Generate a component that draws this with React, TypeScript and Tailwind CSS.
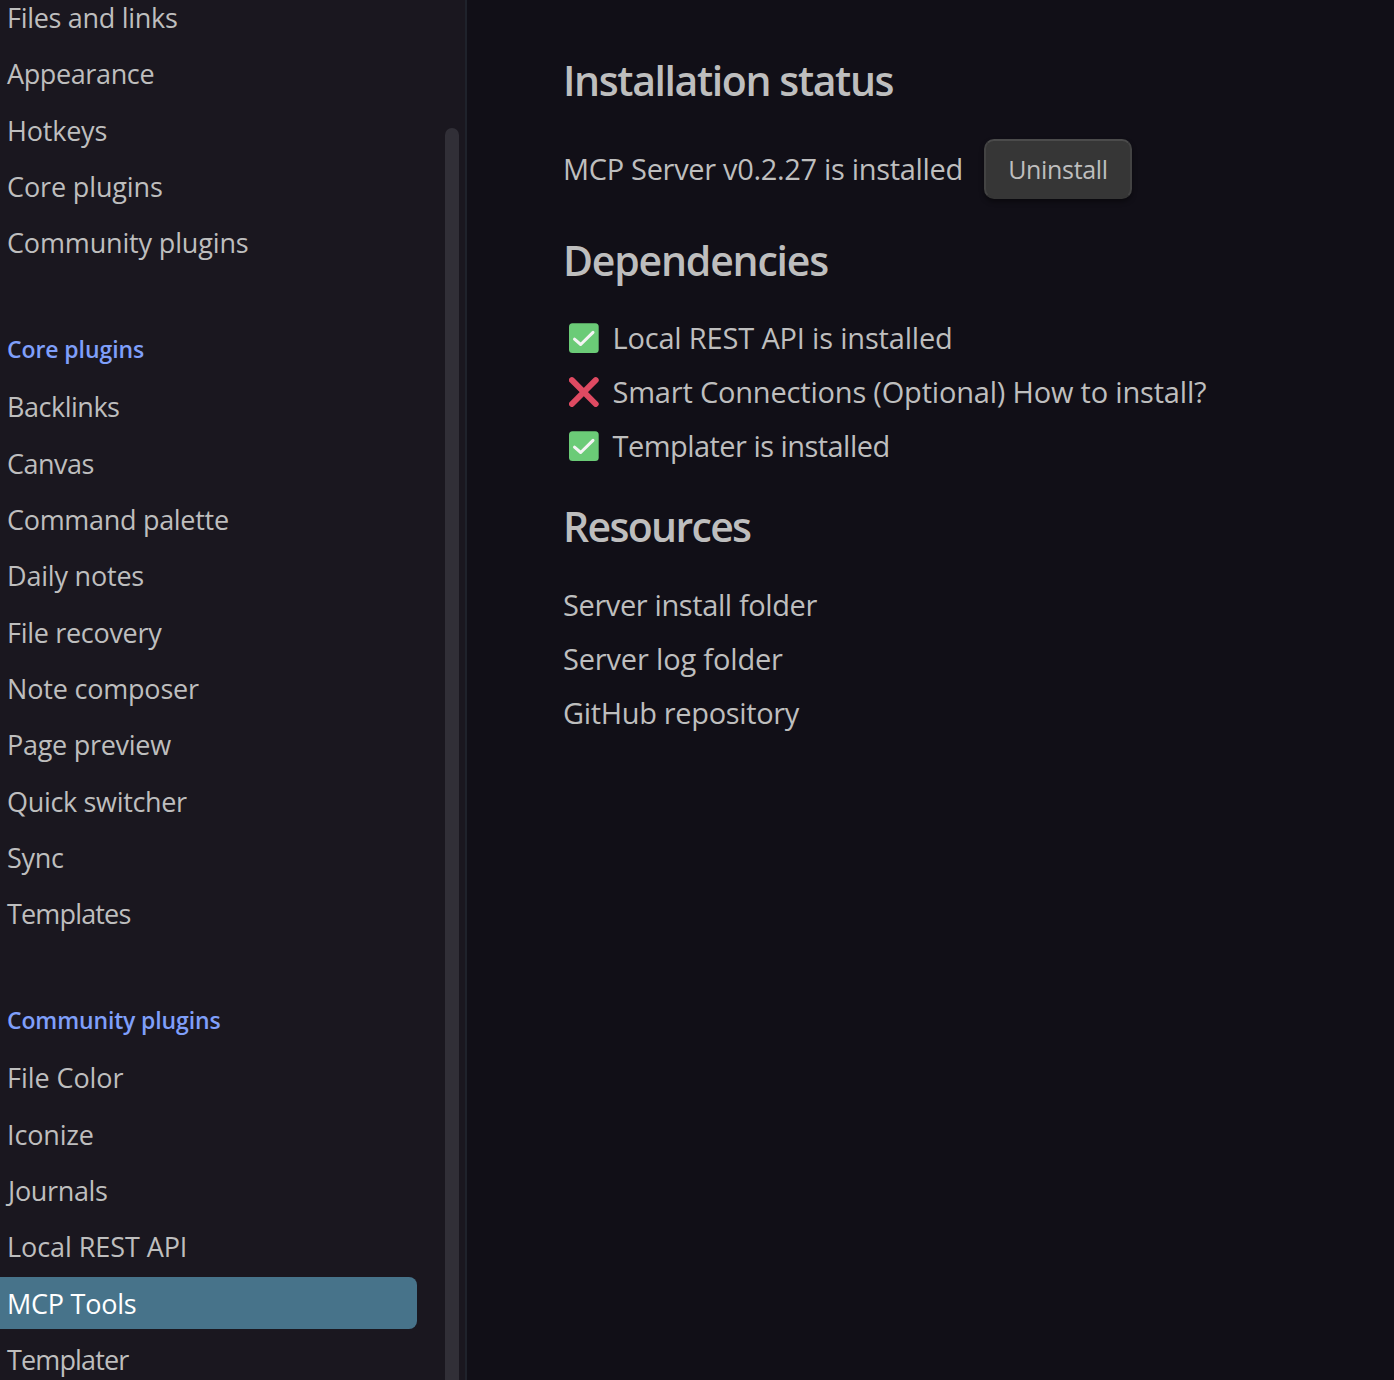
import React from "react";

type Entry = { label: string; tracking: string; active?: boolean };

const options: Entry[] = [
  { label: "Files and links", tracking: "tracking-[-0.3px]" },
  { label: "Appearance", tracking: "tracking-[-0.38px]" },
  { label: "Hotkeys", tracking: "tracking-[-0.2px]" },
  { label: "Core plugins", tracking: "tracking-[-0.13px]" },
  { label: "Community plugins", tracking: "tracking-[-0.15px]" },
];

const corePlugins: Entry[] = [
  { label: "Backlinks", tracking: "tracking-[-0.48px]" },
  { label: "Canvas", tracking: "tracking-[-0.52px]" },
  { label: "Command palette", tracking: "tracking-[-0.3px]" },
  { label: "Daily notes", tracking: "tracking-[-0.2px]" },
  { label: "File recovery", tracking: "tracking-[-0.3px]" },
  { label: "Note composer", tracking: "tracking-[-0.19px]" },
  { label: "Page preview", tracking: "tracking-[-0.28px]" },
  { label: "Quick switcher", tracking: "tracking-[-0.33px]" },
  { label: "Sync", tracking: "tracking-[-0.26px]" },
  { label: "Templates", tracking: "tracking-[-0.84px]" },
];

const communityPlugins: Entry[] = [
  { label: "File Color", tracking: "tracking-[-0.06px]" },
  { label: "Iconize", tracking: "tracking-[-0.15px]" },
  { label: "Journals", tracking: "tracking-[-0.35px] indent-px" },
  { label: "Local REST API", tracking: "tracking-[-0.07px]" },
  { label: "MCP Tools", tracking: "tracking-[-0.25px]", active: true },
  { label: "Templater", tracking: "tracking-[-0.87px]" },
];

const resources: Entry[] = [
  { label: "Server install folder", tracking: "tracking-[-0.39px]" },
  { label: "Server log folder", tracking: "tracking-[-0.17px]" },
  { label: "GitHub repository", tracking: "tracking-[-0.34px]" },
];

function NavList({ items }: { items: Entry[] }) {
  return (
    <ul>
      {items.map((item) => (
        <li
          key={item.label}
          className={`mb-[4.34px] h-[52px] w-[417px] rounded-r-lg pl-[7px] text-[27px] leading-[53px] whitespace-nowrap ${item.tracking} ${
            item.active ? "bg-[#47738a] text-white" : ""
          }`}
        >
          {item.label}
        </li>
      ))}
    </ul>
  );
}

function NavTitle({ children, tracking }: { children: string; tracking: string }) {
  return (
    <h3 className={`mt-[57.7px] h-[54.4px] pl-[7px] text-[23px] leading-[46px] font-semibold text-[#7f9ffa] ${tracking}`}>
      {children}
    </h3>
  );
}

function CheckIcon() {
  return (
    <svg className="size-[30px]" viewBox="0 0 30 30">
      <rect y="0.3" width="29.7" height="29.7" rx="3.5" fill="#6bcb77" />
      <path d="M5.5 16.2 11.7 21.5 24 9.4" fill="none" stroke="#f4f4f4" strokeWidth="3" strokeLinecap="round" strokeLinejoin="round" />
    </svg>
  );
}

function CrossIcon() {
  return (
    <svg className="size-[30px]" viewBox="0 0 30 30">
      <path d="M2.9 3.2 26.7 27M26.7 3.2 2.9 27" fill="none" stroke="#df4a62" strokeWidth="6" strokeLinecap="round" />
    </svg>
  );
}

function Dependency({ ok, label, tracking }: { ok: boolean; label: string; tracking: string }) {
  return (
    <li className="flex h-[54px] items-center gap-[14px] pl-[6.5px]">
      {ok ? <CheckIcon /> : <CrossIcon />}
      <span className={tracking}>{label}</span>
    </li>
  );
}

export default function App() {
  return (
    <div className="flex h-[1380px] w-[1394px] overflow-hidden bg-[#110f17] font-['Open_Sans',sans-serif] text-[#bebebe]">
      <aside className="flex w-[467px] shrink-0 justify-between border-r-2 border-[#1f222b] bg-[#1a171f]">
        <nav className="-mt-[9px]">
          <NavList items={options} />
          <NavTitle tracking="tracking-[-0.08px]">Core plugins</NavTitle>
          <NavList items={corePlugins} />
          <NavTitle tracking="tracking-[-0.14px]">Community plugins</NavTitle>
          <NavList items={communityPlugins} />
        </nav>
        <div className="mt-32 mr-1.5 w-3.5 rounded-t-full bg-[#312f37]" />
      </aside>

      <main className="pt-[50px] pl-[95px] text-[29px] whitespace-nowrap">
        <h2 className="h-[89px] pl-px text-[41px] leading-[60px] font-semibold tracking-[-1.4px]">Installation status</h2>
        <div className="flex h-[60px] w-[570px] items-center justify-between pl-px">
          <span className="tracking-[-0.32px]">MCP Server v0.2.27 is installed</span>
          <button className="h-[60px] w-[148px] rounded-[10px] border-2 border-[#434343] border-t-[#4b4b4b] border-b-[#363636] bg-[#363636] pt-0.5 text-[25px] tracking-[-0.32px] shadow-[0_3px_5px_rgba(0,0,0,0.4)]">
            Uninstall
          </button>
        </div>

        <h2 className="mt-[31px] h-[81px] pl-px text-[41px] leading-[60px] font-semibold tracking-[-1.2px]">Dependencies</h2>
        <ul>
          <Dependency ok label="Local REST API is installed" tracking="tracking-[-0.18px]" />
          <Dependency ok={false} label="Smart Connections (Optional) How to install?" tracking="tracking-[-0.19px]" />
          <Dependency ok label="Templater is installed" tracking="tracking-[-0.54px]" />
        </ul>

        <h2 className="mt-[23px] h-[82px] pl-px text-[41px] leading-[60px] font-semibold tracking-[-1.68px]">Resources</h2>
        <ul className="pl-px">
          {resources.map((r) => (
            <li key={r.label} className={`h-[54px] leading-[54px] ${r.tracking}`}>
              {r.label}
            </li>
          ))}
        </ul>
      </main>
    </div>
  );
}
